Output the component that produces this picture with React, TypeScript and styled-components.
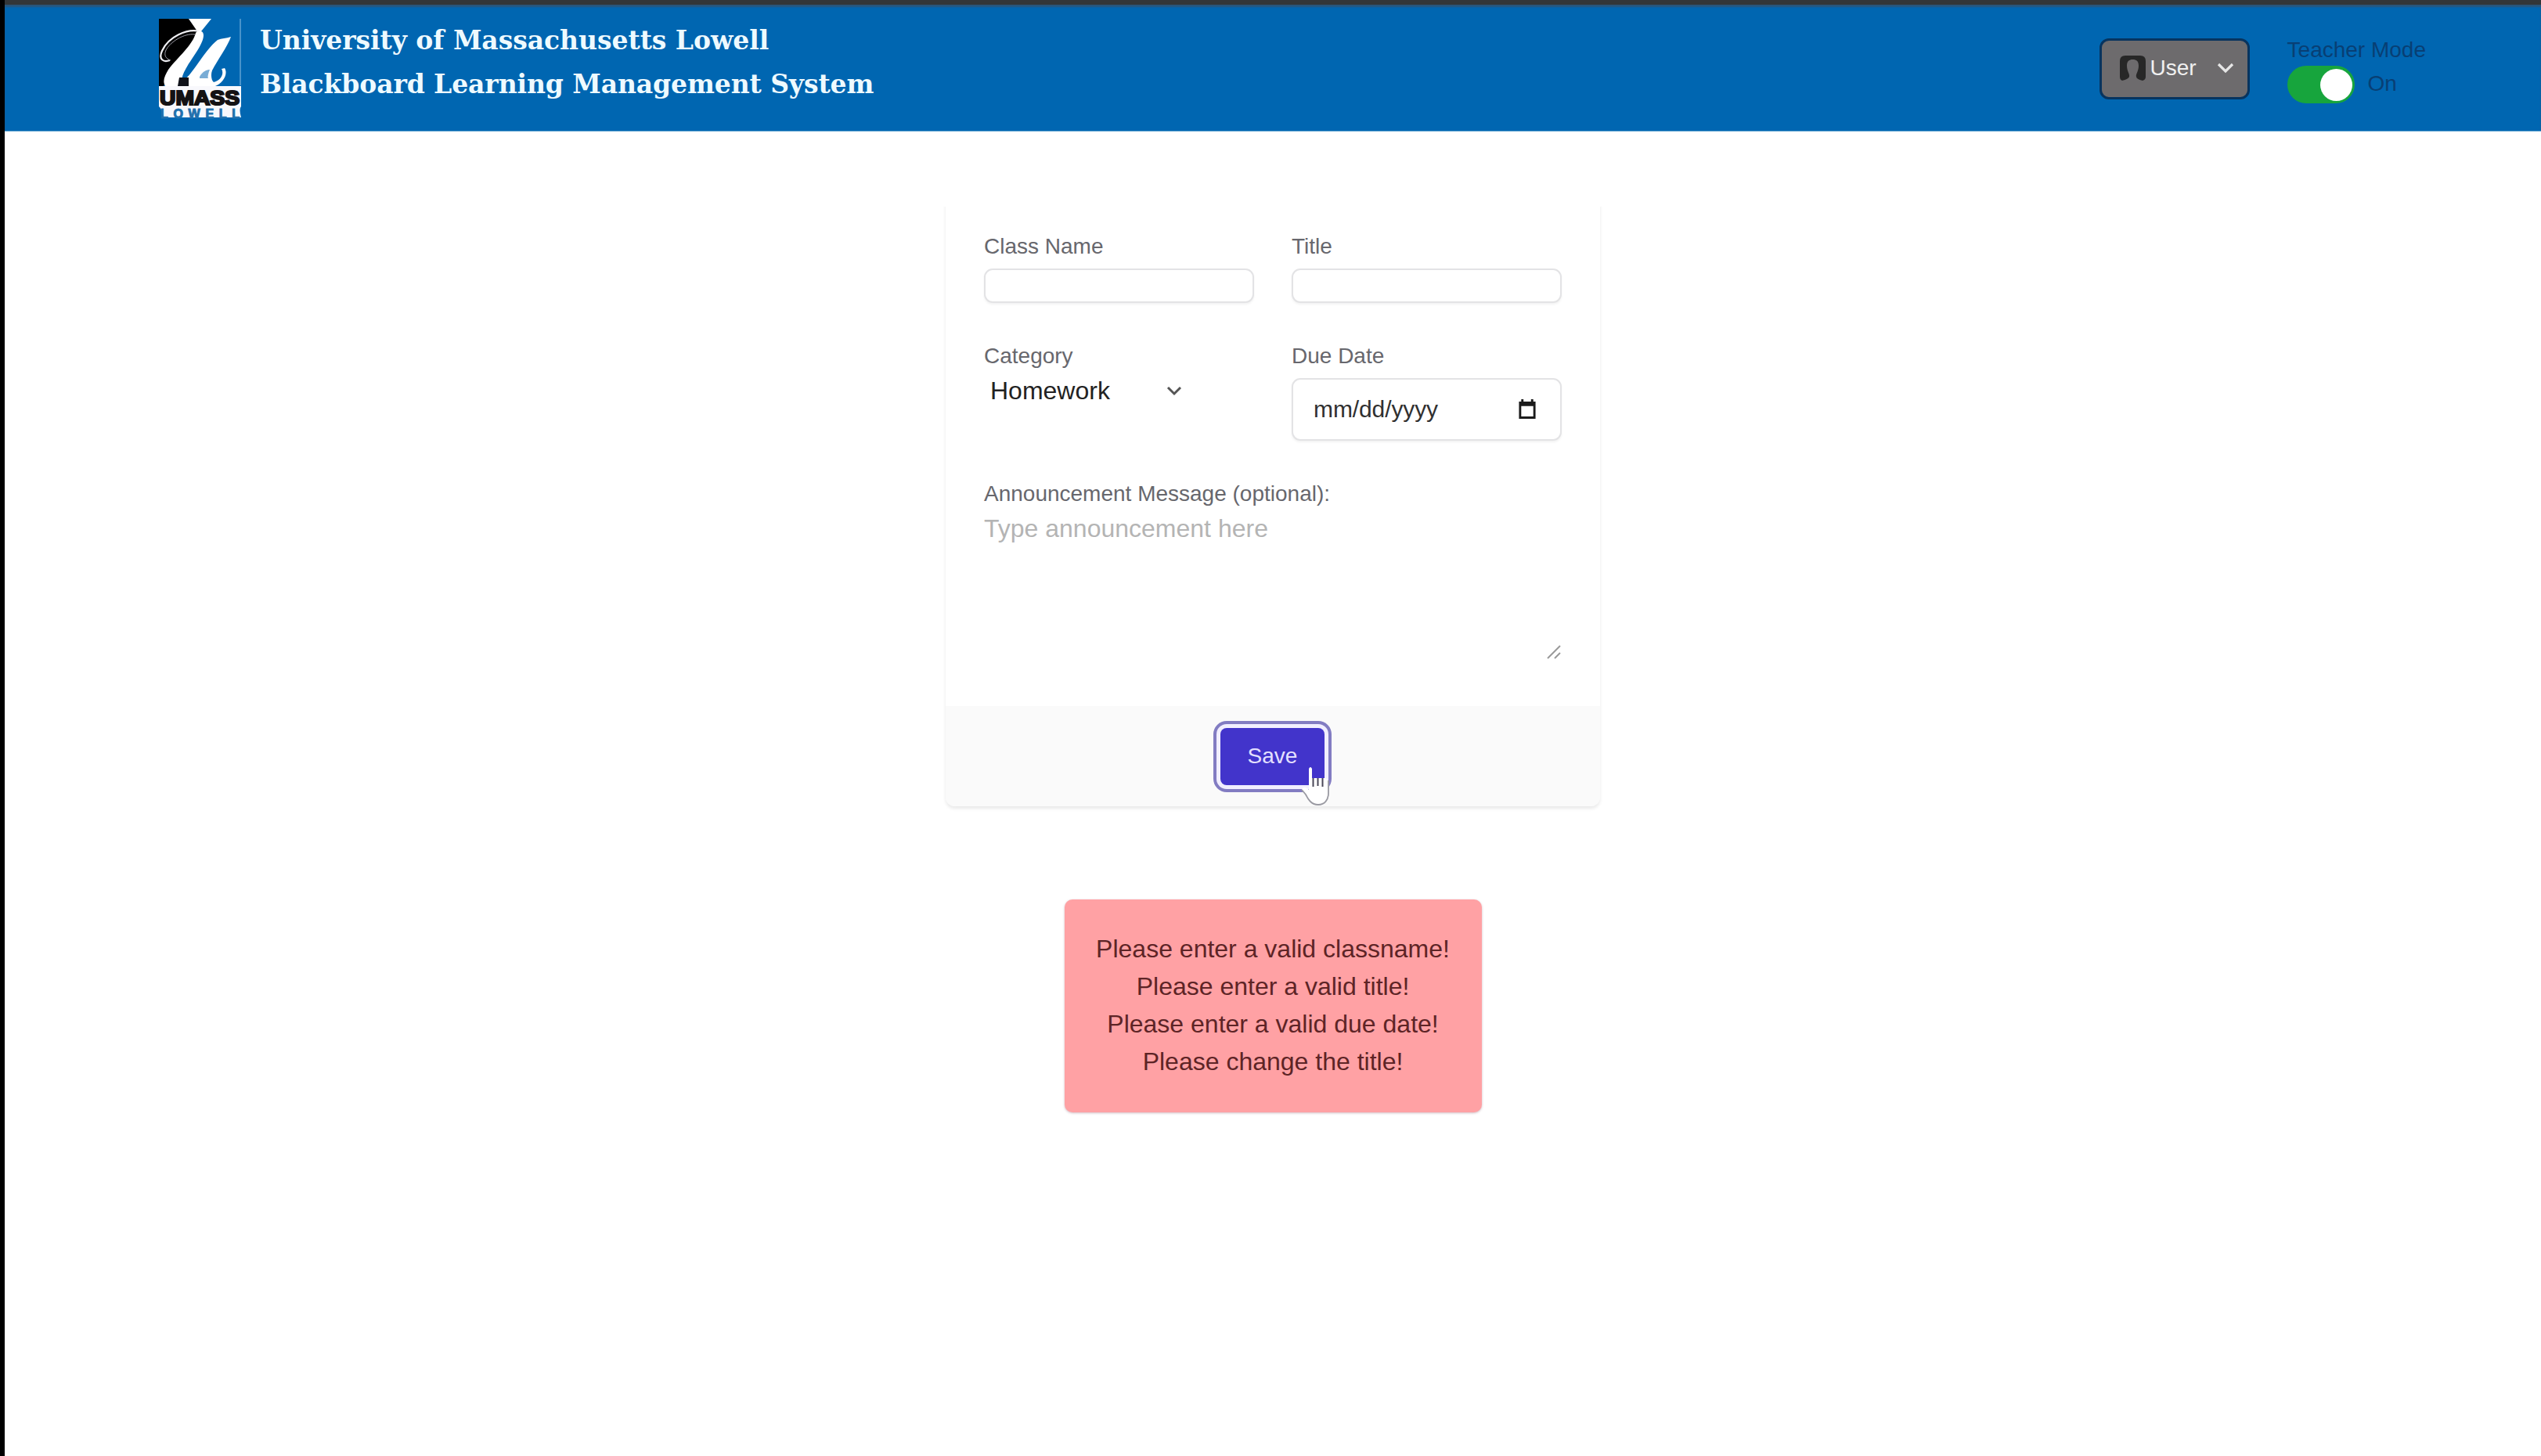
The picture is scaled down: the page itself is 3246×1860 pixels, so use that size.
import React from "react";
import styled, { createGlobalStyle, css } from "styled-components";

const sans = css`
  font-family: "Liberation Sans", Arial, sans-serif;
`;

const GlobalStyle = createGlobalStyle`
  * { box-sizing: border-box; }
  body { margin: 0; background: #fff; ${sans} }
`;

const Page = styled.div`
  width: 3246px;
  height: 1860px;
  overflow: hidden;
  background: #fff;
  border-left: 6px solid #000;
`;

const Header = styled.header`
  display: flex;
  align-items: flex-start;
  height: 168px;
  padding: 0 147px 0 197px;
  background: #0066b1;
  border-top: 6px solid #333638;
  border-bottom: 1px solid #5fa3d0;
  box-shadow: inset 0 3px 2px #2a567a;
`;

const LogoSvg = styled.svg`
  flex: none;
  width: 105px;
  height: 138px;
  margin-top: 17px;
`;

const SiteTitle = styled.h1`
  flex: 1;
  margin: 18px 0 0 24px;
  font: bold 33px/56px "DejaVu Serif", serif;
  color: #eefaff;
`;

const TitleLine = styled.span<{ $spacing: number }>`
  display: block;
  white-space: nowrap;
  letter-spacing: ${(p) => p.$spacing}px;
`;

const UserButton = styled.button`
  ${sans}
  display: flex;
  align-items: center;
  width: 192px;
  height: 78px;
  margin: 43px 48px 0 0;
  padding: 0 17px 3px 23px;
  border: 3px solid #07345f;
  border-radius: 12px;
  background: #6d6b6d;
  color: #f0f0f0;
  font-size: 28px;
`;

const UserIcon = styled.svg`
  width: 33px;
  height: 32px;
  margin-right: 6px;
`;

const ButtonChevron = styled.svg`
  width: 22px;
  height: 14px;
  margin-left: auto;
`;

const TeacherMode = styled.div`
  display: flex;
  flex-direction: column;
  margin-top: 42px;
  color: #083f74;
  font-size: 28px;
  line-height: 32px;
`;

const SwitchRow = styled.div`
  display: flex;
  gap: 17px;
  margin-top: 4px;
`;

const Switch = styled.span`
  display: flex;
  justify-content: flex-end;
  align-items: center;
  width: 86px;
  height: 48px;
  padding-right: 3px;
  border-radius: 24px;
  background: #17a53d;
`;

const Knob = styled.span`
  width: 41px;
  height: 41px;
  border-radius: 50%;
  background: #fff;
`;

const SwitchLabel = styled.span`
  padding-top: 7px;
`;

const Main = styled.main`
  display: flex;
  flex-direction: column;
  align-items: center;
  padding-top: 82px;
`;

const Card = styled.form`
  width: 836px;
  height: 780px;
  display: flex;
  flex-direction: column;
  border-radius: 12px;
  background: #fff;
  box-shadow: 0 3px 4px rgba(0, 0, 0, 0.09);
  clip-path: inset(14px -8px -10px -8px);
`;

const Fields = styled.div`
  flex: 1;
  display: grid;
  grid-template-columns: 345px 345px;
  grid-template-rows: 140px 176px 1fr;
  column-gap: 48px;
  padding: 49px 0 0 49px;
`;

const Field = styled.div<{ $wide?: boolean }>`
  display: flex;
  flex-direction: column;
  grid-column: ${(p) => (p.$wide ? "1 / -1" : "auto")};
`;

const Label = styled.label`
  color: #67676d;
  font-size: 28px;
  line-height: 32px;
`;

const boxed = css`
  border: 2px solid #e3e3e5;
  border-radius: 11px;
  background: #fff;
  box-shadow: 0 2px 3px rgba(0, 0, 0, 0.05);
`;

const TextInput = styled.input`
  ${boxed}
  width: 345px;
  height: 44px;
  margin-top: 12px;
`;

const SelectBox = styled.div`
  display: flex;
  align-items: center;
  justify-content: space-between;
  width: 253px;
  height: 40px;
  margin-top: 8px;
  padding-left: 8px;
  color: #222;
  font-size: 32px;
`;

const SelectChevron = styled.svg`
  width: 20px;
  height: 13px;
`;

const DateBox = styled.div`
  ${boxed}
  display: flex;
  align-items: center;
  justify-content: space-between;
  height: 80px;
  margin-top: 12px;
  padding: 0 30px 1px 26px;
  color: #303030;
  font-size: 30px;
  letter-spacing: -0.1px;
`;

const CalendarIcon = styled.svg`
  width: 24px;
  height: 25px;
`;

const MessageBox = styled.div`
  display: flex;
  flex-direction: column;
  justify-content: space-between;
  align-items: flex-end;
  width: 738px;
  height: 192px;
  margin-top: 4px;
`;

const Placeholder = styled.span`
  align-self: flex-start;
  color: #b4b4b4;
  font-size: 32px;
  line-height: 48px;
`;

const ResizeGrip = styled.svg`
  width: 20px;
  height: 20px;
`;

const CardFooter = styled.div`
  display: flex;
  justify-content: center;
  align-items: flex-start;
  height: 128px;
  padding-top: 28px;
  border-radius: 0 0 12px 12px;
  background: #fafafa;
`;

const SaveButton = styled.button`
  ${sans}
  position: relative;
  width: 133px;
  height: 73px;
  margin-right: 1px;
  padding: 0 0 1px;
  border: 0;
  border-radius: 8px;
  background: #4234cb;
  box-shadow: 0 0 0 5px #f1eeff, 0 0 0 9px #827cc2;
  color: #e4e0ff;
  font-size: 28px;
  line-height: 70px;
`;

const HandCursor = styled.svg`
  position: absolute;
  left: 103px;
  top: 49px;
  width: 38px;
  height: 52px;
`;

const ErrorBox = styled.div`
  width: 533px;
  height: 272px;
  margin-top: 119px;
  padding-top: 39px;
  border-radius: 10px;
  background: #ffa1a4;
  box-shadow: 0 1px 3px rgba(120, 60, 80, 0.35);
  color: #5d2426;
  font-size: 32px;
  line-height: 48px;
  text-align: center;
`;

const ErrorLine = styled.div`
  white-space: nowrap;
`;

const errors = [
  "Please enter a valid classname!",
  "Please enter a valid title!",
  "Please enter a valid due date!",
  "Please change the title!",
];

function Logo() {
  return (
    <LogoSvg viewBox="0 0 105 138" aria-label="UMass Lowell">
      <path d="M0 1H38L52 19L25 62L5 88H0Z" fill="#000" />
      <path d="M38 1H67L54 17H49Z" fill="#fff" />
      <path d="M104 1V86" stroke="#68a7d6" strokeWidth="1.4" />
      <path
        d="M52 17C36 13 12 24 4 42C-1 53 6 57 14 54"
        fill="none"
        stroke="#f0f0f4"
        strokeWidth="2.2"
      />
      <path
        d="M46 21C32 19 14 31 9 41C6 48 9 52 15 54"
        fill="none"
        stroke="#9a9aa4"
        strokeWidth="1"
      />
      <path
        d="M47 19C50 15 57 16 57 22C57 33 43 50 36 62C30 72 28 79 31 80C36 77 41 70 47 62C57 48 66 35 75 28C80 26 86 26 92 24C88 36 74 55 68 67C66 72 67 80 70 82C78 80 84 72 80 65L84 64C89 72 81 84 72 87H8C4 80 8 73 12 66C24 50 43 35 47 19Z"
        fill="#fff"
      />
      <path d="M26 76H38V87H24Z" fill="#10121a" />
      <path d="M52 75C56 68 61 66 65 66C63 71 62 75 63 77H52Z" fill="#0b68b3" opacity="0.55" />
      <path d="M0 87H105V113Q102 116 105 127H6Q4 116 0 113Z" fill="#f8f8fc" />
      <text
        x="1"
        y="110.500"
        fontFamily="Liberation Sans, sans-serif"
        fontWeight="bold"
        fontSize="26"
        textLength="102"
        lengthAdjust="spacingAndGlyphs"
        fill="#141214"
        stroke="#141214"
        strokeWidth="2.2"
      >
        UMASS
      </text>
      <text
        x="2"
        y="127.500"
        fontFamily="Liberation Sans, sans-serif"
        fontWeight="bold"
        fontSize="16"
        textLength="101"
        fill="#1f70ad"
        stroke="#1f70ad"
        strokeWidth="1"
      >
        LOWELL
      </text>
    </LogoSvg>
  );
}

export default function App() {
  return (
    <>
      <GlobalStyle />
      <Page>
        <Header>
          <Logo />
          <SiteTitle>
            <TitleLine $spacing={-0.05}>University of Massachusetts Lowell</TitleLine>
            <TitleLine $spacing={-0.1}>Blackboard Learning Management System</TitleLine>
          </SiteTitle>
          <UserButton type="button">
            <UserIcon viewBox="0 0 33 32">
              <path
                d="M7 0H26Q33 0 33 7V27Q33 31 29 32Q21 30 21 27C20 24 24 20 24 13C24 7 21 5 16.500 5S9 7 9 13C9 20 13 24 12 27Q11 30 3 32Q0 31 0 27V7Q0 0 7 0Z"
                fill="#272727"
              />
            </UserIcon>
            User
            <ButtonChevron viewBox="0 0 22 14">
              <path d="M2 2L11 11L20 2" fill="none" stroke="#e6e6e6" strokeWidth="3.2" />
            </ButtonChevron>
          </UserButton>
          <TeacherMode>
            <span>Teacher Mode</span>
            <SwitchRow>
              <Switch>
                <Knob />
              </Switch>
              <SwitchLabel>On</SwitchLabel>
            </SwitchRow>
          </TeacherMode>
        </Header>
        <Main>
          <Card>
            <Fields>
              <Field>
                <Label>Class Name</Label>
                <TextInput />
              </Field>
              <Field>
                <Label>Title</Label>
                <TextInput />
              </Field>
              <Field>
                <Label>Category</Label>
                <SelectBox>
                  Homework
                  <SelectChevron viewBox="0 0 20 13">
                    <path d="M2 2L10 10L18 2" fill="none" stroke="#555" strokeWidth="3" />
                  </SelectChevron>
                </SelectBox>
              </Field>
              <Field>
                <Label>Due Date</Label>
                <DateBox>
                  mm/dd/yyyy
                  <CalendarIcon viewBox="0 0 24 26">
                    <path d="M1 3H4V0H7V3H17V0H20V3H23V26H1Z M4 9V23H20V9Z" fill="#1b1b1b" fillRule="evenodd" />
                  </CalendarIcon>
                </DateBox>
              </Field>
              <Field $wide>
                <Label>Announcement Message (optional):</Label>
                <MessageBox>
                  <Placeholder>Type announcement here</Placeholder>
                  <ResizeGrip viewBox="0 0 20 20">
                    <path d="M2 18L18 2M11 18L18 11" stroke="#999" strokeWidth="2" />
                  </ResizeGrip>
                </MessageBox>
              </Field>
            </Fields>
            <CardFooter>
              <SaveButton type="button">
                Save
                <HandCursor viewBox="0 0 38 52">
                  <path
                    d="M10 3Q12 -1 14 3V15H31Q35 16 35 20V34C35 43 30 49 22 49C13 49 9 42 6 36L1 30C1 27 5 26 8 28L10 30Z"
                    fill="#fff"
                  />
                  <path
                    d="M35 18V34C35 43 30 49 22 49C13 49 9 42 6 36L1 30"
                    fill="none"
                    stroke="#9a9aa2"
                    strokeWidth="1.8"
                  />
                  <path d="M15.500 15V26M21.500 15V25M27.500 15V26" stroke="#4a4858" strokeWidth="2" />
                </HandCursor>
              </SaveButton>
            </CardFooter>
          </Card>
          <ErrorBox>
            {errors.map((e) => (
              <ErrorLine key={e}>{e}</ErrorLine>
            ))}
          </ErrorBox>
        </Main>
      </Page>
    </>
  );
}
